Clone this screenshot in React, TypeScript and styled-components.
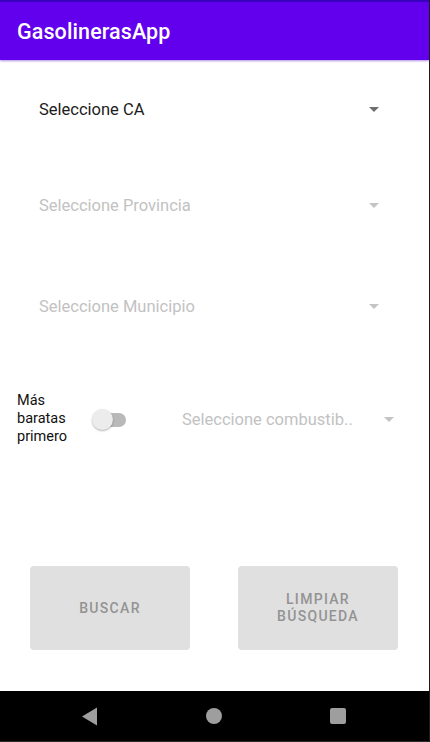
import React from "react";
import styled, { createGlobalStyle } from "styled-components";

const Global = createGlobalStyle`
  html, body { margin: 0; padding: 0; background: #fff; }
  body { font-family: Roboto, "Noto Sans", sans-serif; }
  * { box-sizing: border-box; }
`;

const Screen = styled.div`
  width: 430px;
  height: 742px;
  display: flex;
  flex-direction: column;
  border-right: 1px solid #1c1c1c;
  background: #fff;
  overflow: hidden;
`;

const StatusStrip = styled.div`
  height: 2px;
  background: #3a00c0;
`;

const AppBar = styled.header`
  height: 58px;
  background: #6200ee;
  display: flex;
  align-items: center;
  padding-left: 17px;
  box-shadow: 0 1px 2px rgba(80, 0, 200, 0.45);
  position: relative;
  z-index: 1;
`;

const Title = styled.h1`
  margin: 0;
  color: #fff;
  font-size: 21.5px;
  font-weight: 500;
  font-family: Roboto, sans-serif;
  letter-spacing: 0.1px;
`;

const Main = styled.main`
  flex: 1;
  display: flex;
  flex-direction: column;
`;

const SpinnerRow = styled.div<{ $top: number }>`
  margin-top: ${(p) => p.$top}px;
  height: 48px;
  display: flex;
  align-items: center;
  justify-content: space-between;
  padding: 0 50px 0 39px;
`;

const SpinnerText = styled.span<{ $disabled?: boolean }>`
  font-size: 16.5px;
  color: ${(p) => (p.$disabled ? "#c2c2c2" : "#1c1c1c")};
  white-space: nowrap;
`;

const Arrow = styled.span<{ $disabled?: boolean }>`
  width: 0;
  height: 0;
  border-left: 5.5px solid transparent;
  border-right: 5.5px solid transparent;
  border-top: 5.5px solid ${(p) => (p.$disabled ? "#c4c4c4" : "#6e6e6e")};
  margin-top: 1px;
`;

const OptionRow = styled.div`
  margin-top: 62px;
  display: flex;
  align-items: center;
  padding-left: 17px;
`;

const OptionLabel = styled.div`
  font-size: 14.5px;
  line-height: 18px;
  color: #111;
  width: 75px;
`;

const Switch = styled.div`
  position: relative;
  width: 36px;
  height: 22px;
  margin-top: 1px;
`;

const Track = styled.div`
  position: absolute;
  left: 8px;
  top: 4px;
  width: 26px;
  height: 14px;
  border-radius: 7px;
  background: #b9b9b9;
`;

const Thumb = styled.div`
  position: absolute;
  left: 0;
  top: 0;
  width: 21px;
  height: 21px;
  border-radius: 50%;
  background: #ececec;
  box-shadow: 0 1px 2px rgba(0, 0, 0, 0.3);
`;

const FuelSpinner = styled.div`
  flex: 1;
  display: flex;
  align-items: center;
  justify-content: space-between;
  padding: 0 35px 0 54px;
  height: 48px;
`;

const ButtonRow = styled.div`
  margin-top: 120px;
  display: flex;
  justify-content: space-between;
  padding: 0 31px 0 30px;
`;

const Button = styled.button`
  width: 160px;
  height: 84px;
  border: none;
  border-radius: 4px;
  background: #e0e0e0;
  color: #939393;
  font-family: Roboto, sans-serif;
  font-weight: 500;
  font-size: 14px;
  line-height: 17px;
  letter-spacing: 1.3px;
  text-transform: uppercase;
  padding: 0 12px;
`;

const NavBar = styled.nav`
  height: 51px;
  background: #000;
  display: flex;
  align-items: center;
  justify-content: space-between;
  padding: 0 83px 0 82px;
  border-bottom: 1px solid #2a2a2a;
`;

const NavCircle = styled.div`
  width: 16px;
  height: 16px;
  border-radius: 50%;
  background: #9e9e9e;
`;

const NavSquare = styled.div`
  width: 16px;
  height: 16px;
  border-radius: 2px;
  background: #9e9e9e;
`;

export default function App() {
  return (
    <>
      <Global />
      <Screen>
        <StatusStrip />
        <AppBar>
          <Title>GasolinerasApp</Title>
        </AppBar>
        <Main>
          <SpinnerRow $top={25}>
            <SpinnerText>Seleccione CA</SpinnerText>
            <Arrow />
          </SpinnerRow>
          <SpinnerRow $top={48}>
            <SpinnerText $disabled>Seleccione Provincia</SpinnerText>
            <Arrow $disabled />
          </SpinnerRow>
          <SpinnerRow $top={53}>
            <SpinnerText $disabled>Seleccione Municipio</SpinnerText>
            <Arrow $disabled />
          </SpinnerRow>
          <OptionRow>
            <OptionLabel>
              Más
              <br />
              baratas
              <br />
              primero
            </OptionLabel>
            <Switch>
              <Track />
              <Thumb />
            </Switch>
            <FuelSpinner>
              <SpinnerText $disabled>Seleccione combustib..</SpinnerText>
              <Arrow $disabled />
            </FuelSpinner>
          </OptionRow>
          <ButtonRow>
            <Button>Buscar</Button>
            <Button>
              Limpiar
              <br />
              Búsqueda
            </Button>
          </ButtonRow>
        </Main>
        <NavBar>
          <svg width="16" height="19" viewBox="0 0 16 19">
            <polygon points="0,9.5 15,0.5 15,18.5" fill="#9e9e9e" />
          </svg>
          <NavCircle />
          <NavSquare />
        </NavBar>
      </Screen>
    </>
  );
}
